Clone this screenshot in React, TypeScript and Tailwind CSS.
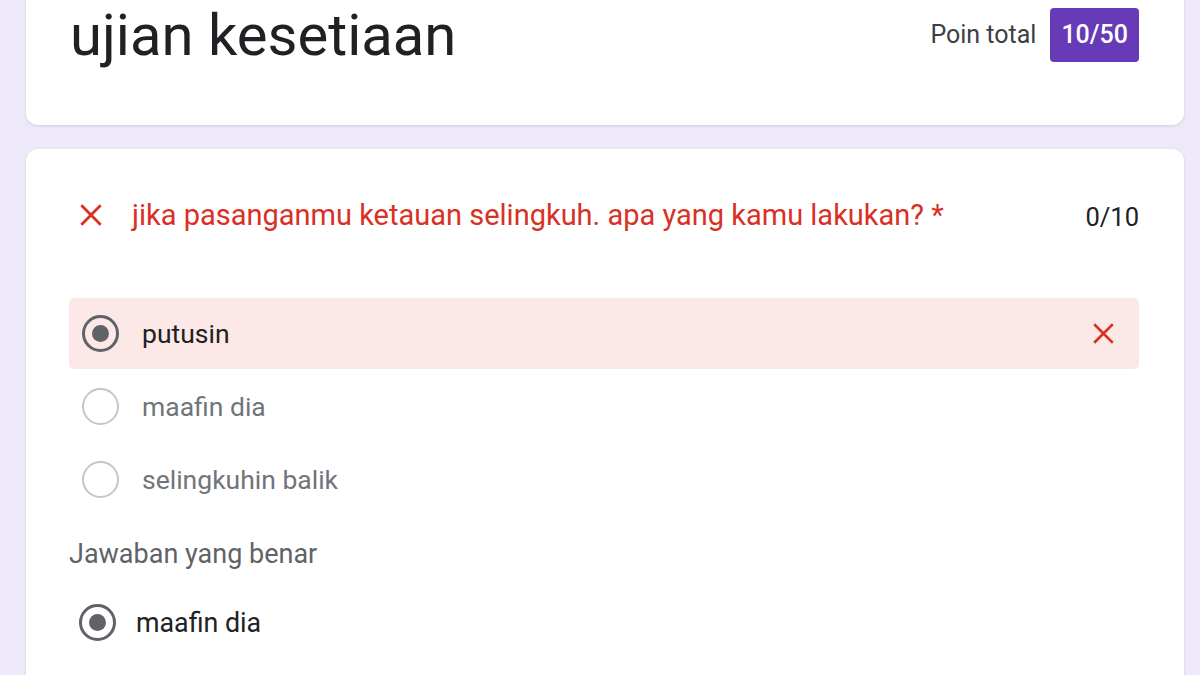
const XIcon = ({ className }: { className?: string }) => (
  <svg viewBox="0 0 24 24" className={className} fill="none" stroke="currentColor" strokeWidth="2.6" strokeLinecap="square">
    <path d="M4 4 L20 20 M20 4 L4 20" />
  </svg>
);

const Radio = ({ checked, muted }: { checked?: boolean; muted?: boolean }) => (
  <span
    className={`flex h-[37px] w-[37px] shrink-0 items-center justify-center rounded-full ${
      muted ? "border-[2.5px] border-[#c4c7c5]" : "border-[3px] border-[#5f6368]"
    }`}
  >
    {checked && <span className="h-[17px] w-[17px] rounded-full bg-[#5f6368]" />}
  </span>
);

const options = [
  { label: "putusin", picked: true },
  { label: "maafin dia", picked: false },
  { label: "selingkuhin balik", picked: false },
];

export default function App() {
  return (
    <div className="min-h-screen overflow-hidden bg-[#ede9f8] pl-[26px] pr-[16px] font-['Roboto',sans-serif]">
      <div className="-mt-[30px] h-[155px] rounded-xl bg-white shadow-[0_1px_3px_rgba(0,0,0,0.12)]">
        <div className="flex items-start justify-between pl-[44px] pr-[45px] pt-[30px]">
          <h1 className="text-[58px] leading-[70px] text-[#202124]">ujian kesetiaan</h1>
          <div className="mt-[8px] flex items-center gap-[14px]">
            <span className="text-[25px] leading-[34px] text-[#3c4043]">Poin total</span>
            <span className="rounded-[4px] bg-[#673ab7] px-[11px] py-[10px] text-[25px] font-medium leading-[34px] text-white">
              10/50
            </span>
          </div>
        </div>
      </div>

      <div className="mt-[24px] rounded-xl bg-white pb-[60px] pl-[43px] pr-[45px] pt-[46px] shadow-[0_1px_3px_rgba(0,0,0,0.12)]">
        <div className="flex items-center justify-between">
          <div className="flex items-center gap-[28px] pl-[9px]">
            <XIcon className="h-[26px] w-[26px] text-[#d93025]" />
            <span className="text-[29px] leading-[36px] text-[#d93025]">
              jika pasanganmu ketauan selingkuh. apa yang kamu lakukan? *
            </span>
          </div>
          <span className="pt-[4px] text-[25.5px] leading-[36px] text-[#202124]">0/10</span>
        </div>

        <div className="mt-[63px] flex flex-col gap-[2px]">
          {options.map((o) => (
            <div
              key={o.label}
              className={`flex h-[71px] items-center justify-between rounded-[5px] pl-[13px] pr-[23px] ${
                o.picked ? "bg-[#fce8e6]" : ""
              }`}
            >
              <div className="flex items-center gap-[23px]">
                <Radio checked={o.picked} muted={!o.picked} />
                <span className={`text-[26.5px] leading-[36px] ${o.picked ? "text-[#202124]" : "text-[#70757a]"}`}>
                  {o.label}
                </span>
              </div>
              {o.picked && <XIcon className="h-[25px] w-[25px] text-[#d93025]" />}
            </div>
          ))}
        </div>

        <div className="mt-[23px] text-[27px] leading-[33px] text-[#5f6368]">Jawaban yang benar</div>
        <div className="mt-[33px] flex items-center gap-[20px] pl-[10px]">
          <Radio checked />
          <span className="text-[26.8px] leading-[36px] text-[#202124]">maafin dia</span>
        </div>
      </div>
    </div>
  );
}
